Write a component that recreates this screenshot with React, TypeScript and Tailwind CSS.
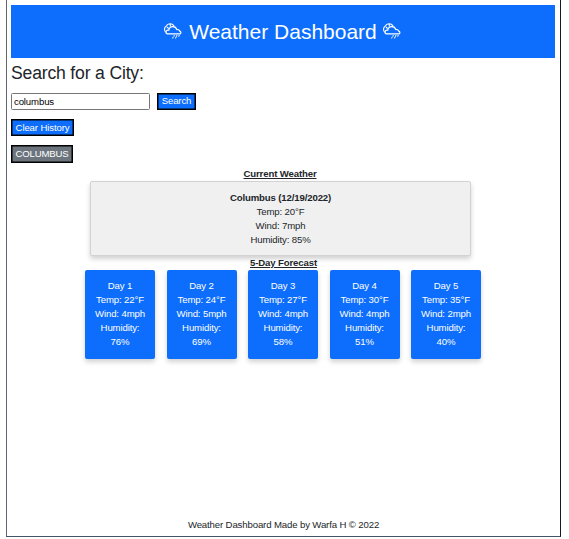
const days = [
  { day: 1, temp: 22, wind: 4, humidity: 76 },
  { day: 2, temp: 24, wind: 5, humidity: 69 },
  { day: 3, temp: 27, wind: 4, humidity: 58 },
  { day: 4, temp: 30, wind: 4, humidity: 51 },
  { day: 5, temp: 35, wind: 2, humidity: 40 },
];

function CloudIcon() {
  return (
    <svg className="mb-px h-4 w-[19px] shrink-0" viewBox="0 0 19 16" fill="none" stroke="white" strokeWidth="1.2" strokeLinecap="round" strokeLinejoin="round">
      <path d="M3.4 10.9a1.9 1.9 0 0 1 .3-3.7h1.1a4.1 4.1 0 0 1 8-.6 2.3 2.3 0 0 1 2.9 1.5 1.5 1.5 0 0 1 .4 2.8Z" />
      <path d="M1.5 9A4.3 4.3 0 0 1 2.2 3.2 4.5 4.5 0 0 1 9.8 2.6M3.2 4.3 4.4 5.2M6.3 1.6v1.3" strokeWidth="1.1" />
      <path d="m10.3 12.6-.4.6m3-.6-.5.7m2.8-.7-.5.6m-5.7 1.4-.3.4m3.2-.5-.3.5" strokeWidth="1.1" />
    </svg>
  );
}

export default function App() {
  return (
    <div className="h-[539px] w-[569px] overflow-hidden bg-white pl-[6px] font-['Liberation_Sans',Arial,sans-serif] text-[9.6px] leading-[14px] tracking-[-0.13px] text-[#212529]">
      <div className="flex h-[537px] w-[555px] flex-col border-r border-b border-l border-r-[#17191d] border-b-[#40546b] border-l-[#5e6670] px-1 pt-[5px]">
        <header className="mr-px flex h-[53px] shrink-0 items-center justify-center gap-[6px] bg-[#0d6efd] text-white">
          <CloudIcon />
          <h1 className="text-[21px] leading-[26px] tracking-normal">Weather Dashboard</h1>
          <CloudIcon />
        </header>
        <main className="flex flex-1 flex-col">
          <h2 className="mt-[5px] text-[17.6px] leading-[21px] tracking-[-0.18px]">Search for a City:</h2>
          <div className="mt-2 flex h-[18px] items-center gap-[7px]">
            <input className="h-[17px] w-[139px] rounded-[1.5px] border border-[#767676] bg-white px-[2px] text-[9.6px] tracking-[-0.13px] text-black outline-none" defaultValue="columbus" aria-label="City" />
            <button className="flex h-[17px] w-[39px] items-center justify-center border border-black bg-[#0d6efd] tracking-[-0.13px] text-white shadow-[inset_0_0_0_0.5px_#000]">Search</button>
          </div>
          <button className="mt-[9px] flex h-[17px] w-[63px] items-center justify-center border border-black bg-[#0d6efd] tracking-[-0.13px] text-white shadow-[inset_0_0_0_0.5px_#000]">Clear History</button>
          <button className="mt-[9px] flex h-[18px] w-[62px] items-center justify-center border border-black bg-[#6c757d] tracking-[-0.16px] text-white shadow-[inset_0_0_0_0.5px_#000]">COLUMBUS</button>
          <section className="mt-1 flex flex-col items-center pr-[7px] text-center">
            <h3 className="font-bold underline">Current Weather</h3>
            <div className="ml-px h-[75px] w-[381px] rounded-[2px] border border-[#d2d2d2] bg-[#f0f0f0] pt-[9px] shadow-[0_3px_5px_rgba(0,0,0,0.18)]">
              <p className="font-bold">Columbus (12/19/2022)</p>
              <p>Temp: 20°F</p>
              <p>Wind: 7mph</p>
              <p>Humidity: 85%</p>
            </div>
            <h3 className="ml-[7px] font-bold underline">5-Day Forecast</h3>
            <div className="ml-[6px] flex gap-[11.5px]">
              {days.map((d) => (
                <div key={d.day} className="h-[89px] w-[70px] rounded-[2px] bg-[#0d6efd] px-[9px] pt-[9px] text-white shadow-[0_3px_5px_rgba(0,0,0,0.18)]">
                  <p>Day {d.day}</p>
                  <p className="whitespace-nowrap">Temp: {d.temp}°F</p>
                  <p className="whitespace-nowrap">Wind: {d.wind}mph</p>
                  <p>Humidity:<br />{d.humidity}%</p>
                </div>
              ))}
            </div>
          </section>
        </main>
        <footer className="mb-[4px] text-center">Weather Dashboard Made by Warfa H © 2022</footer>
      </div>
    </div>
  );
}
